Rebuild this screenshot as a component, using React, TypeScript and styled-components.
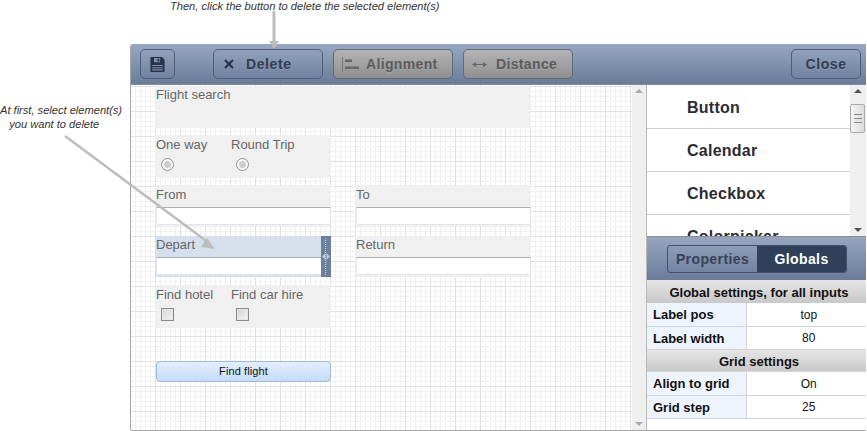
import React from 'react';
import styled, { createGlobalStyle } from 'styled-components';

const GlobalStyle = createGlobalStyle`
  html, body {
    margin: 0;
    padding: 0;
    background: #fff;
    overflow: hidden;
  }
  * {
    box-sizing: border-box;
  }
`;

const Page = styled.div`
  position: relative;
  width: 867px;
  height: 431px;
  padding: 44px 1px 0 130px;
  font-family: 'Liberation Sans', Arial, sans-serif;
  overflow: hidden;
`;

const Note = styled.div<{ $top: number; $left: number }>`
  position: absolute;
  top: ${(p) => p.$top}px;
  left: ${(p) => p.$left}px;
  font-size: 11.100px;
  line-height: 14px;
  font-style: italic;
  color: #333;
  white-space: pre;
  z-index: 3;
`;

const ArrowLayer = styled.svg`
  position: absolute;
  top: 0;
  left: 0;
  z-index: 2;
  pointer-events: none;
`;

const Window = styled.div`
  width: 736px;
  height: 387px;
  border-left: 1px solid #a6a6a6;
  border-bottom: 1px solid #a6a6a6;
  border-top-left-radius: 3px;
  border-bottom-left-radius: 3px;
  display: flex;
  flex-direction: column;
  overflow: hidden;
`;

const Toolbar = styled.div`
  height: 41px;
  flex: none;
  display: flex;
  align-items: flex-start;
  padding: 5px 5px 0 9px;
  background: linear-gradient(#98a8c2, #6a7c98);
  border-bottom: 1px solid #7d8ba3;
`;

const ToolButton = styled.div<{ $width: number; $off?: boolean; $left?: number; $center?: boolean }>`
  width: ${(p) => p.$width}px;
  height: 30px;
  margin-left: ${(p) => p.$left ?? 10}px;
  padding-left: ${(p) => (p.$center ? 0 : 8)}px;
  display: flex;
  align-items: center;
  justify-content: ${(p) => (p.$center ? 'center' : 'flex-start')};
  border: 1px solid ${(p) => (p.$off ? '#5f6a7b' : '#4d5d78')};
  border-radius: 5px;
  font-size: 14px;
  font-weight: 700;
  letter-spacing: ${(p) => (p.$off ? 0.35 : 0.6)}px;
  color: ${(p) => (p.$off ? '#5b5b5b' : '#2f3d55')};
  background: ${(p) => (p.$off ? 'linear-gradient(#b4b4b4, #8f8f8f)' : 'transparent')};
  text-shadow: 0 1px 0 rgba(255, 255, 255, 0.12);
`;

const IconSlot = styled.span<{ $inset?: number }>`
  width: 24px;
  flex: none;
  display: flex;
  align-items: center;
  padding-left: ${(p) => p.$inset ?? 0}px;
`;

const Body = styled.div`
  flex: 1;
  display: flex;
  min-height: 0;
`;

const Canvas = styled.div`
  width: 501px;
  flex: none;
  padding: 0 0 0 24px;
  background-color: #fff;
  background-image:
    linear-gradient(to right, #e2e2e2 1px, transparent 1px),
    linear-gradient(to bottom, #e2e2e2 1px, transparent 1px),
    linear-gradient(to right, #f1f1f1 1px, transparent 1px),
    linear-gradient(to bottom, #f1f1f1 1px, transparent 1px);
  background-size: 25px 25px, 25px 25px, 5px 5px, 5px 5px;
  background-position: -1px 1px, -1px 1px, -1px 1px, -1px 1px;
`;

const FormRow = styled.div<{ $gap: number; $first?: boolean }>`
  display: flex;
  gap: 24px;
  margin-top: ${(p) => (p.$first ? 1 : 0)}px;
  margin-bottom: ${(p) => p.$gap}px;
`;

const Field = styled.div<{ $width: number; $height?: number; $selected?: boolean }>`
  position: relative;
  width: ${(p) => p.$width}px;
  height: ${(p) => p.$height ?? 41}px;
  background: ${(p) => (p.$selected ? '#d6e0ed' : '#f0f0f0')};
  font-size: 13px;
  color: #666;
`;

const Label = styled.div<{ $tight?: boolean }>`
  height: ${(p) => (p.$tight ? 21 : 22)}px;
  line-height: ${(p) => (p.$tight ? 17 : 19)}px;
  padding-left: 1px;
  white-space: nowrap;
`;

const TextInput = styled.div`
  height: 18px;
  margin: 0 0 0 1px;
  background: #fff;
  border: 1px solid #e3e6ec;
  border-top: 1px solid #b0b0b0;
  border-radius: 0 0 2px 2px;
`;

const Choices = styled.div`
  display: flex;
`;

const Choice = styled.div`
  width: 75px;
`;

const Radio = styled.div`
  width: 13px;
  height: 13px;
  margin: 1px 0 0 6px;
  border-radius: 50%;
  border: 1px solid #949494;
  background: radial-gradient(circle at 50% 50%, #cdcdcd 0 3px, #f6f6f6 4px);
`;

const Check = styled.div`
  width: 13px;
  height: 13px;
  margin: 1px 0 0 6px;
  border: 1px solid #8a8a8a;
  background: linear-gradient(135deg, #d4d4d4, #f6f6f6);
  box-shadow: inset 0 0 0 1px #e6e6e6;
`;

const Handle = styled.div`
  position: absolute;
  top: 0;
  right: 0;
  width: 10px;
  height: 100%;
  background: #6c7f9c;
  display: flex;
  align-items: center;
  justify-content: center;
  &::before {
    content: '';
    position: absolute;
    top: 2px;
    bottom: 2px;
    left: 4px;
    border-left: 1px dotted #c9d3e2;
  }
`;

const Submit = styled.div`
  width: 175px;
  height: 21px;
  margin-left: 1px;
  border: 1px solid #9db8d8;
  border-radius: 4px;
  background: linear-gradient(#e2eefc, #c6dcf9);
  font-size: 11px;
  letter-spacing: 0.1px;
  line-height: 19px;
  text-align: center;
  color: #111;
`;

const ScrollTrack = styled.div<{ $width: number }>`
  position: relative;
  width: ${(p) => p.$width}px;
  flex: none;
  background: #efefef;
  display: flex;
  flex-direction: column;
  justify-content: space-between;
  align-items: center;
  padding: 4px 0;
`;

const Arrow = styled.div<{ $down?: boolean; $dark?: boolean }>`
  width: 0;
  height: 0;
  border-left: 4px solid transparent;
  border-right: 4px solid transparent;
  ${(p) =>
    p.$down
      ? `border-top: 4px solid ${p.$dark ? '#555' : '#aaa'};`
      : `border-bottom: 4px solid ${p.$dark ? '#555' : '#aaa'};`}
`;

const Thumb = styled.div`
  position: absolute;
  top: 19px;
  left: 0;
  width: 15px;
  height: 29px;
  border: 1px solid #aaa;
  border-radius: 2px;
  background: linear-gradient(to right, #f4f4f4, #dcdcdc);
  display: flex;
  align-items: center;
  justify-content: center;
  &::before {
    content: '';
    width: 8px;
    height: 7px;
    border-top: 1px solid #888;
    border-bottom: 1px solid #888;
    background: linear-gradient(#888, #888) center / 100% 1px no-repeat;
  }
`;

const Side = styled.div`
  flex: 1;
  display: flex;
  flex-direction: column;
  min-width: 0;
  border-left: 1px solid #b8b8b8;
`;

const ListBox = styled.div`
  height: 152px;
  flex: none;
  display: flex;
  overflow: hidden;
  border-bottom: 1px solid #8d8d8d;
`;

const List = styled.div`
  flex: 1;
  min-width: 0;
  padding-top: 1px;
  background: #fff;
`;

const ListItem = styled.div`
  height: 43px;
  padding-left: 40px;
  line-height: 44px;
  font-size: 16px;
  letter-spacing: 0.25px;
  font-weight: 700;
  color: #2b2b33;
  border-bottom: 1px solid #d2d2d2;
`;

const TabBar = styled.div`
  height: 43px;
  flex: none;
  padding: 8px 0 0 20px;
  background: linear-gradient(#96a6c0, #6a7c98);
`;

const Tabs = styled.div`
  width: 180px;
  height: 28px;
  display: flex;
  border: 1px solid #42516b;
  border-radius: 3px;
  overflow: hidden;
`;

const Tab = styled.div<{ $active?: boolean; $width: number }>`
  width: ${(p) => p.$width}px;
  text-align: center;
  line-height: 26px;
  font-size: 14px;
  font-weight: 700;
  letter-spacing: 0.4px;
  color: ${(p) => (p.$active ? '#fff' : '#3a4257')};
  background: ${(p) => (p.$active ? '#30405a' : 'transparent')};
`;

const PropTable = styled.table`
  width: 100%;
  border-collapse: collapse;
  table-layout: fixed;
  font-size: 12px;
  color: #111;
`;

const KeyColumn = styled.col`
  width: 99px;
`;

const SectionCell = styled.th`
  height: 23px;
  padding: 1px 0 0 5px;
  font-size: 13px;
  font-weight: 700;
  text-align: center;
  background: linear-gradient(#e6e6e6, #c8c8c8);
`;

const KeyCell = styled.td`
  height: 23px;
  padding: 1px 0 0 6px;
  font-size: 13px;
  font-weight: 700;
  background: #edf4fe;
  border-bottom: 1px solid #d4d4d4;
  border-right: 1px solid #d4d4d4;
`;

const ValueCell = styled.td`
  height: 23px;
  padding: 1px 0 0 5px;
  text-align: center;
  background: #fff;
  border-bottom: 1px solid #d4d4d4;
`;

const components = ['Button', 'Calendar', 'Checkbox', 'Colorpicker'];

const globals = [
  { title: 'Global settings, for all inputs', rows: [['Label pos', 'top'], ['Label width', '80']] },
  { title: 'Grid settings', rows: [['Align to grid', 'On'], ['Grid step', '25']] },
];

const App = () => {
  return (
    <Page>
      <GlobalStyle />
      <Note $top={-1} $left={170}>Then, click the button to delete the selected element(s)</Note>
      <Note $top={103} $left={0}>{'At first, select element(s)\n   you want to delete'}</Note>
      <ArrowLayer width="867" height="431">
        <path d="M274 11V42" stroke="#bdbdbd" strokeWidth="3" fill="none" />
        <path d="M269 41h10l-5 8z" fill="#bdbdbd" />
        <path d="M65 136L209 243" stroke="#bdbdbd" strokeWidth="2.5" fill="none" />
        <path d="M215 249l-14-2 6-9z" fill="#bdbdbd" />
      </ArrowLayer>
      <Window>
        <Toolbar>
          <ToolButton $width={35} $left={0} $center>
            <svg width="15" height="15" viewBox="0 0 16 17">
              <path d="M1 0h12l3 3v13a1 1 0 0 1-1 1H1a1 1 0 0 1-1-1V1a1 1 0 0 1 1-1z" fill="#26324a" />
              <path d="M4 1h7v5H4z" fill="#7e8fab" />
              <path d="M8 2h2v3H8z" fill="#26324a" />
              <path d="M2 9h12v1.200H2zM2 11.500h12v1.200H2zM2 14h12v1.200H2z" fill="#7e8fab" />
            </svg>
          </ToolButton>
          <ToolButton $width={110} $left={38}>
            <IconSlot $inset={2}>
              <svg width="10" height="10" viewBox="0 0 10 10">
                <path d="M1 1l8 8M9 1l-8 8" stroke="#26324a" strokeWidth="2.200" />
              </svg>
            </IconSlot>
            Delete
          </ToolButton>
          <ToolButton $width={120} $off>
            <IconSlot>
              <svg width="17" height="15" viewBox="0 0 17 15">
                <path d="M.5 0v15" stroke="#777" strokeWidth="1" />
                <path d="M3 2.500h7v2.500H3zM3 9.500h14v2.500H3z" fill="#666" />
              </svg>
            </IconSlot>
            Alignment
          </ToolButton>
          <ToolButton $width={110} $off>
            <IconSlot>
              <svg width="15" height="5" viewBox="0 0 15 5">
                <path d="M0 2.500L4 0v2h7V0l4 2.500L11 5V3H4v2z" fill="#666" />
              </svg>
            </IconSlot>
            Distance
          </ToolButton>
          <ToolButton $width={70} $left={218} $center>Close</ToolButton>
        </Toolbar>
        <Body>
          <Canvas>
            <FormRow $gap={7} $first>
              <Field $width={376} $height={42}><Label $tight>Flight search</Label></Field>
            </FormRow>
            <FormRow $gap={7}>
              <Field $width={176} $height={43}>
                <Choices>
                  <Choice><Label>One way</Label><Radio /></Choice>
                  <Choice><Label>Round Trip</Label><Radio /></Choice>
                </Choices>
              </Field>
            </FormRow>
            <FormRow $gap={10}>
              <Field $width={176}><Label>From</Label><TextInput /></Field>
              <Field $width={176}><Label>To</Label><TextInput /></Field>
            </FormRow>
            <FormRow $gap={8}>
              <Field $width={176} $selected>
                <Label $tight>Depart</Label>
                <TextInput />
                <Handle>
                  <svg width="8" height="7" viewBox="0 0 8 7" style={{ position: 'relative' }}>
                    <path d="M0 3.500L3.500 0v7zM8 3.500L4.500 0v7z" fill="#b9c6d9" />
                  </svg>
                </Handle>
              </Field>
              <Field $width={176}><Label $tight>Return</Label><TextInput /></Field>
            </FormRow>
            <FormRow $gap={33}>
              <Field $width={176} $height={43}>
                <Choices>
                  <Choice><Label>Find hotel</Label><Check /></Choice>
                  <Choice><Label>Find car hire</Label><Check /></Choice>
                </Choices>
              </Field>
            </FormRow>
            <Submit>Find flight</Submit>
          </Canvas>
          <ScrollTrack $width={14}>
            <Arrow />
            <Arrow $down />
          </ScrollTrack>
          <Side>
            <ListBox>
              <List>
                {components.map((name) => (
                  <ListItem key={name}>{name}</ListItem>
                ))}
              </List>
              <ScrollTrack $width={16}>
                <Arrow $dark />
                <Thumb />
                <Arrow $down $dark />
              </ScrollTrack>
            </ListBox>
            <TabBar>
              <Tabs>
                <Tab $width={90}>Properties</Tab>
                <Tab $width={90} $active>Globals</Tab>
              </Tabs>
            </TabBar>
            <PropTable>
              <colgroup>
                <KeyColumn />
                <col />
              </colgroup>
              <tbody>
                {globals.map((group) => (
                  <React.Fragment key={group.title}>
                    <tr><SectionCell colSpan={2}>{group.title}</SectionCell></tr>
                    {group.rows.map(([key, value]) => (
                      <tr key={key}>
                        <KeyCell>{key}</KeyCell>
                        <ValueCell>{value}</ValueCell>
                      </tr>
                    ))}
                  </React.Fragment>
                ))}
              </tbody>
            </PropTable>
          </Side>
        </Body>
      </Window>
    </Page>
  );
};

export default App;
